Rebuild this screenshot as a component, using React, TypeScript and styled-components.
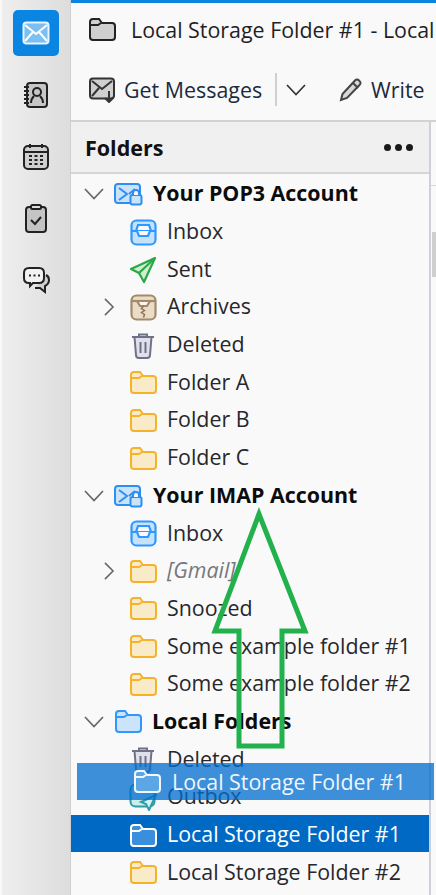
import React from "react";
import styled, { createGlobalStyle } from "styled-components";

const GlobalStyle = createGlobalStyle`
  html, body {
    margin: 0;
    padding: 0;
    background: #f9f9fa;
  }
  body {
    font-family: "Open Sans", "Noto Sans", sans-serif;
    color: #1f1f24;
    overflow: hidden;
  }
`;

const Window = styled.div`
  position: relative;
  display: flex;
  width: 436px;
  height: 895px;
  overflow: hidden;
  background: #f9f9fa;
`;

const Rail = styled.nav`
  flex: 0 0 69px;
  margin-left: 2px;
  display: flex;
  flex-direction: column;
  align-items: center;
  gap: 16px;
  padding-top: 10px;
  box-sizing: border-box;
  background: linear-gradient(90deg, #eeeeee 0%, #dddddd 100%);
  border-right: 1px solid #cfcfcf;
`;

const RailButton = styled.button<{ $active?: boolean }>`
  width: 46px;
  height: 46px;
  display: flex;
  align-items: center;
  justify-content: center;
  border: 0;
  padding: 0;
  border-radius: 5px;
  background: ${({ $active }) => ($active ? "#0b85e2" : "transparent")};
`;

const Main = styled.div`
  flex: 1;
  min-width: 0;
  display: flex;
  flex-direction: column;
  border-top: 3px solid #0a84e0;
`;

const TabRow = styled.div`
  height: 52px;
  flex: none;
  display: flex;
  align-items: center;
  gap: 15px;
  padding: 0 0 0 18px;
  white-space: nowrap;
  font-size: 21.4px;
  overflow: hidden;
  & > svg {
    flex: none;
  }
`;

const Toolbar = styled.div`
  height: 67px;
  flex: none;
  box-sizing: border-box;
  display: flex;
  align-items: center;
  padding: 4px 0 0 18px;
  border-bottom: 2px solid #d2d2d2;
  font-size: 21.4px;
  white-space: nowrap;
  & > svg {
    flex: none;
  }
`;

const ToolLabel = styled.span<{ $gap: number }>`
  margin-left: ${({ $gap }) => $gap}px;
  color: #1d2a3a;
`;

const ToolDivider = styled.span`
  width: 2px;
  height: 33px;
  margin: 0 9px 0 13px;
  background: #cfcfcf;
`;

const ToolGap = styled.span`
  width: 33px;
`;

const Content = styled.div`
  flex: 1;
  min-height: 0;
  display: flex;
`;

const FolderPane = styled.section`
  flex: 0 0 358px;
  border-right: 2px solid #cdd0d6;
  display: flex;
  flex-direction: column;
`;

const PaneHeader = styled.header`
  height: 50px;
  flex: none;
  display: flex;
  align-items: center;
  justify-content: space-between;
  padding: 0 16px 0 14px;
  background: #f0f0f0;
  border-bottom: 2px solid #d6d6d6;
  font-size: 21.5px;
  font-weight: 700;
  color: #111;
`;

const Dots = styled.span`
  display: flex;
  gap: 4px;
  & > i {
    width: 7px;
    height: 7px;
    border-radius: 50%;
    background: #1a1a1a;
  }
`;

const Tree = styled.ul`
  list-style: none;
  margin: 0;
  padding: 0;
`;

const Row = styled.li<{ $depth: number; $selected?: boolean }>`
  height: 37.7px;
  box-sizing: border-box;
  display: flex;
  align-items: center;
  padding-left: ${({ $depth }) => 13 + $depth * 15}px;
  background: ${({ $selected }) => ($selected ? "#0069c4" : "transparent")};
  color: ${({ $selected }) => ($selected ? "#fff" : "#27272c")};
  font-size: 21.4px;
  white-space: nowrap;
`;

const Twisty = styled.span`
  flex: 0 0 20px;
  height: 20px;
  margin: 3px 10px 0 0;
  display: flex;
  align-items: center;
  justify-content: center;
`;

const RowIcon = styled.span`
  flex: 0 0 28px;
  display: flex;
  align-items: center;
  justify-content: center;
  margin: 3px 10px 0 0;
`;

const RowLabel = styled.span<{ $bold?: boolean; $muted?: boolean }>`
  font-weight: ${({ $bold }) => ($bold ? 700 : 400)};
  font-style: ${({ $muted }) => ($muted ? "italic" : "normal")};
  color: ${({ $bold, $muted }) => ($bold ? "#0c0c0d" : $muted ? "#77777c" : "inherit")};
  font-size: ${({ $bold }) => ($bold ? "21.4px" : "inherit")};
`;

const SidePane = styled.div`
  flex: 1;
  display: flex;
  flex-direction: column;
`;

const SideHead = styled.div`
  height: 63px;
  border-bottom: 1px solid #d8d8d8;
`;

const SideThumb = styled.div`
  margin: 46px 0 0 1px;
  height: 45px;
  background: #cfcfcf;
`;

const DragGhost = styled.div`
  position: absolute;
  left: 77px;
  top: 763px;
  width: 357px;
  height: 37px;
  display: flex;
  align-items: center;
  padding-left: 57px;
  gap: 11px;
  box-sizing: border-box;
  background: rgba(0, 109, 205, 0.76);
  color: #eef6ff;
  font-size: 21.4px;
  white-space: nowrap;
`;

const ArrowMark = styled.svg`
  position: absolute;
  left: 205px;
  top: 505px;
  width: 110px;
  height: 250px;
`;

const MailIcon = () => (
  <svg width="28" height="24" viewBox="0 0 28 24" fill="none">
    <rect x="1.5" y="1.5" width="25" height="21" rx="3" fill="#7cc0f2" stroke="#e8f4fe" strokeWidth="2" />
    <path d="M3 4l11 9 11-9M3 20l8-9M25 20l-8-9" stroke="#fff" strokeWidth="2" />
  </svg>
);

const BookIcon = () => (
  <svg width="26" height="28" viewBox="0 0 26 28" fill="none" stroke="#222" strokeWidth="2">
    <rect x="4" y="2" width="20" height="24" rx="3" fill="#c6c6c6" />
    <path d="M1 6h5M1 10h5M1 14h5M1 18h5M1 22h5" />
    <circle cx="14" cy="11" r="4" />
    <path d="M8 22c0-4 2-6 3-7M20 22c0-4-2-6-3-7" />
  </svg>
);

const CalendarIcon = () => (
  <svg width="28" height="28" viewBox="0 0 28 28" fill="none" stroke="#222" strokeWidth="2">
    <rect x="2" y="3" width="24" height="23" rx="4" fill="#cfcfcf" />
    <path d="M2 9h24M8 1v4M20 1v4" />
    <path d="M7 13h3M12.5 13h3M18 13h3M7 17h3M12.5 17h3M18 17h3M7 21h3M12.5 21h3M18 21h3" strokeWidth="2.2" />
  </svg>
);

const TaskIcon = () => (
  <svg width="24" height="30" viewBox="0 0 24 30" fill="none" stroke="#222" strokeWidth="2">
    <rect x="2" y="3" width="20" height="25" rx="3" fill="#c4c4c4" />
    <rect x="7" y="1" width="10" height="4" rx="1.5" fill="#ddd" />
    <path d="M7 16l4 4 6-7" />
  </svg>
);

const ChatIcon = () => (
  <svg width="28" height="28" viewBox="0 0 28 28" fill="none" stroke="#222" strokeWidth="2">
    <path d="M24 8c2 1 3 3 3 5 0 3-2 5-4 6l0 6-5-4h-5" fill="#d0d0d0" />
    <path d="M7 1h10c3 0 5 2 5 5v5c0 3-2 5-5 5h-6l-3 3v-3H7c-3 0-5-2-5-5V6c0-3 2-5 5-5z" fill="#f2f2f2" />
    <path d="M7 8.5h2M11.500 8.500h2M16 8.500h2" strokeWidth="1.800" />
  </svg>
);

const Chevron = ({ open, size = 20, stroke = "#66666b" }: { open?: boolean; size?: number; stroke?: string }) => (
  <svg width={size} height={size} viewBox="0 0 20 20" fill="none" stroke={stroke} strokeWidth="1.7">
    <path d={open ? "M1 5l9 9.500 9-9.500" : "M5.500 1l9 9-9 9"} />
  </svg>
);

const Folder = ({ stroke, fill }: { stroke: string; fill: string }) => (
  <svg width="27" height="23" viewBox="0 0 27 23" fill="none" stroke={stroke} strokeWidth="2">
    <path d="M1 4a3 3 0 0 1 3-3h6l3 4h10a3 3 0 0 1 3 3v11a3 3 0 0 1-3 3H4a3 3 0 0 1-3-3z" fill={fill} />
    <path d="M1 7h8l3-2" />
  </svg>
);

const AccountIcon = () => (
  <svg width="29" height="24" viewBox="0 0 29 24" fill="none" stroke="#2f8ff0" strokeWidth="2">
    <rect x="1" y="2" width="25" height="19" rx="3" fill="#c9e3fb" />
    <path d="M5 6l8 6-8 6M15 12l6-5" />
    <rect x="16.500" y="13" width="11" height="9.500" rx="2" fill="#c9e3fb" />
    <path d="M19 13v-2a3 3 0 0 1 6 0v2" fill="#f9f9fa" />
  </svg>
);

const InboxIcon = () => (
  <svg width="27" height="27" viewBox="0 0 27 27" fill="none" stroke="#2f98ff" strokeWidth="2.200">
    <rect x="1.500" y="1.500" width="24" height="24" rx="5" fill="#c6e2fb" />
    <path d="M8 6h11l2 6H6z" fill="#f6fafe" />
    <path d="M2 12h5l2 5h9l2-5h5" fill="#f9fbfe" />
  </svg>
);

const SentIcon = () => (
  <svg width="28" height="28" viewBox="0 0 28 28" fill="none" stroke="#2aa846" strokeWidth="2.200" strokeLinejoin="round">
    <path d="M26 2L2 13l8 4 5 9z" fill="#cfeed2" />
    <path d="M10 17L26 2" />
  </svg>
);

const ArchiveIcon = () => (
  <svg width="27" height="27" viewBox="0 0 27 27" fill="none" stroke="#a48a68" strokeWidth="2.200">
    <rect x="1.500" y="1.500" width="24" height="24" rx="5" fill="#e9dcc8" />
    <path d="M2 7h23" />
    <path d="M7 7l3 5h7l3-5z" fill="#fbf6ee" />
    <path d="M13.500 12l-2 2.500 3 2-3 2 3 2-1 3" stroke="#8c7453" strokeWidth="1.500" />
  </svg>
);

const TrashIcon = () => (
  <svg width="24" height="27" viewBox="0 0 24 27" fill="none" stroke="#6f7188" strokeWidth="2">
    <path d="M1 5h22M8 5V2.500h8V5" />
    <path d="M3.500 5l1.500 18a3 3 0 0 0 3 3h8a3 3 0 0 0 3-3l1.500-18z" fill="#dfe0ea" />
    <path d="M9.500 10v11M14.500 10v11" />
  </svg>
);

const OutboxIcon = () => (
  <svg width="28" height="28" viewBox="0 0 28 28" fill="none" stroke="#2c9ea8" strokeWidth="2">
    <rect x="1.500" y="1.500" width="24" height="22" rx="5" fill="#cfecec" />
    <path d="M27 12L12 19l5 2 3 6z" fill="#d7f0f0" />
  </svg>
);

type Item = {
  label: string;
  depth: number;
  icon: React.ReactNode;
  bold?: boolean;
  muted?: boolean;
  twisty?: "open" | "closed";
  selected?: boolean;
};

const yellow = <Folder stroke="#f5b32c" fill="#faebc8" />;

const items: Item[] = [
  { label: "Your POP3 Account", depth: 0, icon: <AccountIcon />, bold: true, twisty: "open" },
  { label: "Inbox", depth: 1, icon: <InboxIcon /> },
  { label: "Sent", depth: 1, icon: <SentIcon /> },
  { label: "Archives", depth: 1, icon: <ArchiveIcon />, twisty: "closed" },
  { label: "Deleted", depth: 1, icon: <TrashIcon /> },
  { label: "Folder A", depth: 1, icon: yellow },
  { label: "Folder B", depth: 1, icon: yellow },
  { label: "Folder C", depth: 1, icon: yellow },
  { label: "Your IMAP Account", depth: 0, icon: <AccountIcon />, bold: true, twisty: "open" },
  { label: "Inbox", depth: 1, icon: <InboxIcon /> },
  { label: "[Gmail]", depth: 1, icon: yellow, muted: true, twisty: "closed" },
  { label: "Snoozed", depth: 1, icon: yellow },
  { label: "Some example folder #1", depth: 1, icon: yellow },
  { label: "Some example folder #2", depth: 1, icon: yellow },
  { label: "Local Folders", depth: 0, icon: <Folder stroke="#2f98ff" fill="#cbe4fc" />, bold: true, twisty: "open" },
  { label: "Deleted", depth: 1, icon: <TrashIcon /> },
  { label: "Outbox", depth: 1, icon: <OutboxIcon /> },
  {
    label: "Local Storage Folder #1",
    depth: 1,
    icon: <Folder stroke="#fff" fill="#3a8fdc" />,
    selected: true,
  },
  { label: "Local Storage Folder #2", depth: 1, icon: yellow },
];

export default function App() {
  return (
    <Window>
      <GlobalStyle />
      <Rail>
        <RailButton $active>
          <MailIcon />
        </RailButton>
        <RailButton>
          <BookIcon />
        </RailButton>
        <RailButton>
          <CalendarIcon />
        </RailButton>
        <RailButton>
          <TaskIcon />
        </RailButton>
        <RailButton>
          <ChatIcon />
        </RailButton>
      </Rail>
      <Main>
        <TabRow>
          <Folder stroke="#222" fill="#cfcfcf" />
          <span>Local Storage Folder #1 - Local Folders</span>
        </TabRow>
        <Toolbar>
          <svg width="29" height="26" viewBox="0 0 29 26" fill="none" stroke="#333" strokeWidth="2">
            <rect x="1" y="1.500" width="24" height="20" rx="3" fill="#cfcfcf" />
            <path d="M3 4l10 8 10-8M3 19l7-8M20 14v11M16 21l4 4 4-4" />
          </svg>
          <ToolLabel $gap={6}>Get Messages</ToolLabel>
          <ToolDivider />
          <Chevron open stroke="#333" />
          <ToolGap />
          <svg width="23" height="24" viewBox="0 0 23 24" fill="none" stroke="#444" strokeWidth="2">
            <path d="M2 22l1.500-6L16 2.500a2.500 2.500 0 0 1 4 0l.5.500a2.500 2.500 0 0 1 0 4L8 20z" fill="#d8d8d8" />
            <path d="M14 5l5 5" />
          </svg>
          <ToolLabel $gap={9}>Write</ToolLabel>
        </Toolbar>
        <Content>
          <FolderPane>
            <PaneHeader>
              Folders
              <Dots>
                <i />
                <i />
                <i />
              </Dots>
            </PaneHeader>
            <Tree>
              {items.map((item, i) => (
                <Row key={i} $depth={item.depth} $selected={item.selected}>
                  <Twisty>
                    {item.twisty && (
                      <Chevron open={item.twisty === "open"} size={item.twisty === "open" ? 20 : 18} />
                    )}
                  </Twisty>
                  <RowIcon>{item.icon}</RowIcon>
                  <RowLabel $bold={item.bold} $muted={item.muted}>
                    {item.label}
                  </RowLabel>
                </Row>
              ))}
            </Tree>
          </FolderPane>
          <SidePane>
            <SideHead />
            <SideThumb />
          </SidePane>
        </Content>
      </Main>
      <DragGhost>
        <Folder stroke="#f1f7ff" fill="#5da6e6" />
        Local Storage Folder #1
      </DragGhost>
      <ArrowMark viewBox="0 0 110 250" fill="none">
        <path
          d="M54 9L10 126h24v115h43V126h23z"
          stroke="#22b14c"
          strokeWidth="5"
          strokeLinejoin="miter"
        />
      </ArrowMark>
    </Window>
  );
}
